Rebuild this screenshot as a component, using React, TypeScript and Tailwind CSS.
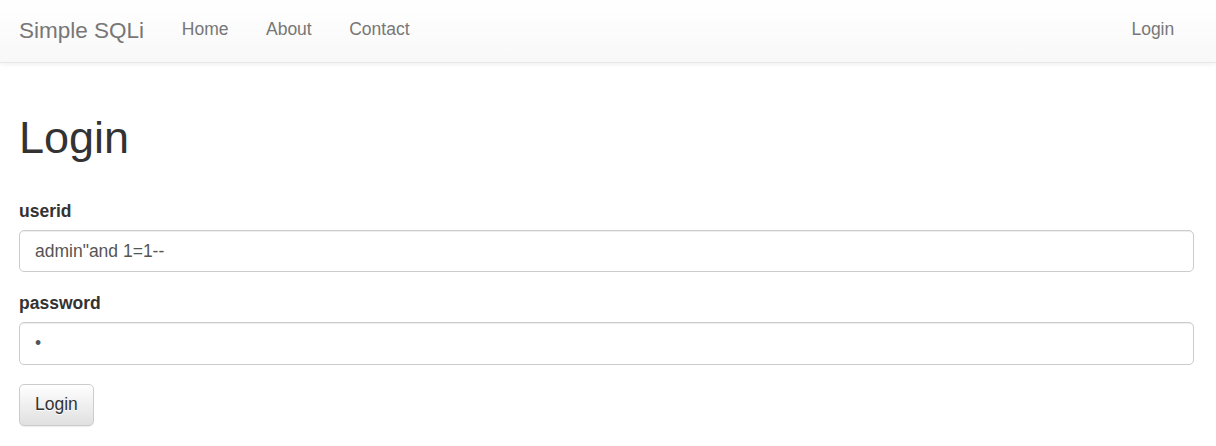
import React from "react";

export default function App() {
  const font = { fontFamily: '"Liberation Sans", Arial, Helvetica, sans-serif' };
  return (
    <div className="min-h-[446px] w-full bg-white text-[#333]" style={font}>
      <nav className="flex h-[63px] items-start justify-between border-b border-[#e7e7e7] bg-gradient-to-b from-white to-[#f8f8f8] px-[19px] shadow-[0_1px_5px_rgba(0,0,0,0.075)]">
        <div className="flex items-start">
          <a className="-ml-[19px] block px-[19px] pt-[17.5px] text-[22.5px] leading-[25px] text-[#777]">Simple SQLi</a>
          <a className="block px-[18.75px] pt-[17.25px] text-[17.5px] leading-[25px] text-[#777]">Home</a>
          <a className="block px-[18.75px] pt-[17.25px] text-[17.5px] leading-[25px] text-[#777]">About</a>
          <a className="block px-[18.75px] pt-[17.25px] text-[17.5px] leading-[25px] text-[#777]">Contact</a>
        </div>
        <a className="mr-[4px] block px-[18.75px] pt-[17.25px] text-[17.5px] leading-[25px] text-[#777]">Login</a>
      </nav>
      <main className="pl-[19px] pr-[22px] pt-[49.5px]">
        <h1 className="mb-[36.5px] text-[45px] font-normal leading-[49.5px] text-[#333]">Login</h1>
        <div className="mb-[18.75px]">
          <label className="mb-[6.25px] block text-[17.5px] font-bold leading-[25px] text-[#333]">userid</label>
          <input
            readOnly
            defaultValue={'admin"and 1=1--'}
            className="block h-[42.5px] w-full rounded-[5px] border border-[#ccc] bg-white px-[15px] py-[7.5px] text-[17.5px] text-[#555] shadow-[inset_0_1px_1px_rgba(0,0,0,0.075)] outline-none"
            style={font}
          />
        </div>
        <div className="mb-[18.75px]">
          <label className="mb-[6.25px] block text-[17.5px] font-bold leading-[25px] text-[#333]">password</label>
          <input
            readOnly
            type="password"
            defaultValue="a"
            className="block h-[42.5px] w-full rounded-[5px] border border-[#ccc] bg-white px-[15px] py-[7.5px] text-[17.5px] text-[#555] shadow-[inset_0_1px_1px_rgba(0,0,0,0.075)] outline-none"
            style={font}
          />
        </div>
        <button
          className="h-[42.5px] rounded-[5px] border border-[#ccc] bg-gradient-to-b from-white to-[#e0e0e0] px-[15px] text-[17.5px] leading-[25px] text-[#333] shadow-[inset_0_1px_0_rgba(255,255,255,0.15),0_1px_1px_rgba(0,0,0,0.075)] [text-shadow:0_1px_0_#fff]"
          style={font}
        >
          Login
        </button>
      </main>
    </div>
  );
}
